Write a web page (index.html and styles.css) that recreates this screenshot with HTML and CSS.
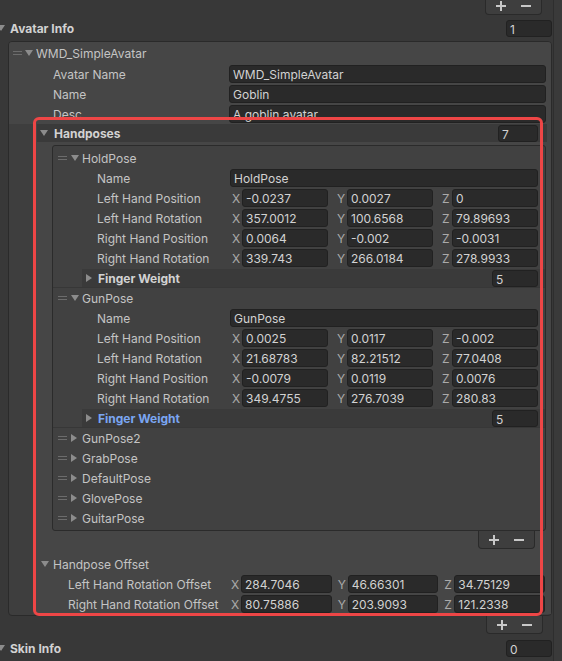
FILE: index.html
```html
<!DOCTYPE html>
<html lang="en">
<head>
    <meta charset="UTF-8">
    <meta name="viewport" content="width=device-width, initial-scale=1.0">
    <title>Avatar Info</title>
    <link rel="stylesheet" href="styles.css">
</head>
<body>
    <div class="inspector">
        <div class="pane">
            <!-- footer of the list above, scrolled half out of view -->
            <div class="list-footer footer-top"><span class="btn-plus"></span><span class="btn-minus"></span></div>

            <div class="row section">
                <span class="tri"></span>
                <span class="bold">Avatar Info</span>
                <span class="field count">1</span>
            </div>

            <div class="list outer">
                <div class="el-top">
                    <div class="row el-head">
                        <span class="handle"></span><span class="tri"></span><span class="el-name">WMD_SimpleAvatar</span>
                    </div>
                    <div class="row prop lv1"><span class="label">Avatar Name</span><span class="field">WMD_SimpleAvatar</span></div>
                    <div class="row prop lv1"><span class="label">Name</span><span class="field">Goblin</span></div>
                    <div class="row prop lv1"><span class="label">Desc</span><span class="field">A goblin avatar.</span></div>
                </div>

                <div class="hp-block">
                    <div class="array-head">
                        <span class="tri"></span>
                        <span class="bold">Handposes</span>
                        <span class="field count">7</span>
                    </div>

                    <div class="list inner">
                        <!-- expanded pose -->
                        <div class="element open">
                            <div class="row el-head">
                                <span class="handle"></span><span class="tri"></span><span class="el-name">HoldPose</span>
                            </div>
                            <div class="row prop lv2"><span class="label">Name</span><span class="field">HoldPose</span></div>
                            <div class="row prop lv2">
                                <span class="label">Left Hand Position</span>
                                <div class="vec">
                                    <div class="axis"><b>X</b><span class="field">-0.0237</span></div>
                                    <div class="axis"><b>Y</b><span class="field">0.0027</span></div>
                                    <div class="axis"><b>Z</b><span class="field">0</span></div>
                                </div>
                            </div>
                            <div class="row prop lv2">
                                <span class="label">Left Hand Rotation</span>
                                <div class="vec">
                                    <div class="axis"><b>X</b><span class="field">357.0012</span></div>
                                    <div class="axis"><b>Y</b><span class="field">100.6568</span></div>
                                    <div class="axis"><b>Z</b><span class="field">79.89693</span></div>
                                </div>
                            </div>
                            <div class="row prop lv2">
                                <span class="label">Right Hand Position</span>
                                <div class="vec">
                                    <div class="axis"><b>X</b><span class="field">0.0064</span></div>
                                    <div class="axis"><b>Y</b><span class="field">-0.002</span></div>
                                    <div class="axis"><b>Z</b><span class="field">-0.0031</span></div>
                                </div>
                            </div>
                            <div class="row prop lv2">
                                <span class="label">Right Hand Rotation</span>
                                <div class="vec">
                                    <div class="axis"><b>X</b><span class="field">339.743</span></div>
                                    <div class="axis"><b>Y</b><span class="field">266.0184</span></div>
                                    <div class="axis"><b>Z</b><span class="field">278.9933</span></div>
                                </div>
                            </div>
                            <div class="row fw-row">
                                <div class="fw-band">
                                    <span class="tri closed"></span>
                                    <span class="bold">Finger Weight</span>
                                    <span class="field count">5</span>
                                </div>
                            </div>
                        </div>

                        <div class="element open">
                            <div class="row el-head">
                                <span class="handle"></span><span class="tri"></span><span class="el-name">GunPose</span>
                            </div>
                            <div class="row prop lv2"><span class="label">Name</span><span class="field">GunPose</span></div>
                            <div class="row prop lv2">
                                <span class="label">Left Hand Position</span>
                                <div class="vec">
                                    <div class="axis"><b>X</b><span class="field">0.0025</span></div>
                                    <div class="axis"><b>Y</b><span class="field">0.0117</span></div>
                                    <div class="axis"><b>Z</b><span class="field">-0.002</span></div>
                                </div>
                            </div>
                            <div class="row prop lv2">
                                <span class="label">Left Hand Rotation</span>
                                <div class="vec">
                                    <div class="axis"><b>X</b><span class="field">21.68783</span></div>
                                    <div class="axis"><b>Y</b><span class="field">82.21512</span></div>
                                    <div class="axis"><b>Z</b><span class="field">77.0408</span></div>
                                </div>
                            </div>
                            <div class="row prop lv2">
                                <span class="label">Right Hand Position</span>
                                <div class="vec">
                                    <div class="axis"><b>X</b><span class="field">-0.0079</span></div>
                                    <div class="axis"><b>Y</b><span class="field">0.0119</span></div>
                                    <div class="axis"><b>Z</b><span class="field">0.0076</span></div>
                                </div>
                            </div>
                            <div class="row prop lv2">
                                <span class="label">Right Hand Rotation</span>
                                <div class="vec">
                                    <div class="axis"><b>X</b><span class="field">349.4755</span></div>
                                    <div class="axis"><b>Y</b><span class="field">276.7039</span></div>
                                    <div class="axis"><b>Z</b><span class="field">280.83</span></div>
                                </div>
                            </div>
                            <div class="row fw-row">
                                <div class="fw-band">
                                    <span class="tri closed"></span>
                                    <span class="bold hover">Finger Weight</span>
                                    <span class="field count">5</span>
                                </div>
                            </div>
                        </div>

                        <!-- collapsed poses -->
                        <div class="row el-head"><span class="handle"></span><span class="tri closed"></span><span class="el-name">GunPose2</span></div>
                        <div class="row el-head"><span class="handle"></span><span class="tri closed"></span><span class="el-name">GrabPose</span></div>
                        <div class="row el-head"><span class="handle"></span><span class="tri closed"></span><span class="el-name">DefaultPose</span></div>
                        <div class="row el-head"><span class="handle"></span><span class="tri closed"></span><span class="el-name">GlovePose</span></div>
                        <div class="row el-head"><span class="handle"></span><span class="tri closed"></span><span class="el-name">GuitarPose</span></div>
                    </div>
                    <div class="list-footer footer-inner"><span class="btn-plus"></span><span class="btn-minus"></span></div>

                    <div class="row foldout">
                        <span class="tri"></span>
                        <span class="text">Handpose Offset</span>
                    </div>
                    <div class="row prop offset">
                        <span class="label">Left Hand Rotation Offset</span>
                        <div class="vec">
                            <div class="axis"><b>X</b><span class="field">284.7046</span></div>
                            <div class="axis"><b>Y</b><span class="field">46.66301</span></div>
                            <div class="axis"><b>Z</b><span class="field">34.75129</span></div>
                        </div>
                    </div>
                    <div class="row prop offset">
                        <span class="label">Right Hand Rotation Offset</span>
                        <div class="vec">
                            <div class="axis"><b>X</b><span class="field">80.75886</span></div>
                            <div class="axis"><b>Y</b><span class="field">203.9093</span></div>
                            <div class="axis"><b>Z</b><span class="field">121.2338</span></div>
                        </div>
                    </div>
                </div>
            </div>
            <div class="list-footer footer-outer"><span class="btn-plus"></span><span class="btn-minus"></span></div>

            <div class="row section skin">
                <span class="tri"></span>
                <span class="bold">Skin Info</span>
                <span class="field count">0</span>
            </div>
        </div>
        <div class="scrollbar"></div>
    </div>

    <!-- red marker around the hand pose block -->
    <div class="callout"></div>
</body>
</html>
```

FILE: styles.css
```css
/* Dark inspector look */
body {
    margin: 0;
    width: 562px;
    height: 661px;
    overflow: hidden;
    position: relative;
    background-color: #383838;
    font-family: Inter, "Noto Sans", sans-serif;
    font-size: 12px;
    line-height: 20px;
    color: #c4c4c4;
}

.inspector {
    display: flex;
    height: 661px;
}

.pane {
    width: 553px;
    flex: none;
}

.scrollbar {
    flex: 1;
    border-left: 1px solid #2e2e2e;
    background-color: #3a3a3a;
}

/* Generic property row */
.row {
    display: flex;
    align-items: center;
    height: 20px;
    white-space: nowrap;
}

/* Inter sits a little high, push label text down a pixel */
.label,
.bold,
.el-name,
.text,
.axis b {
    padding-top: 2px;
    line-height: 20px;
}

.bold {
    font-weight: 700;
    color: #d2d2d2;
}

.hover {
    color: #7aa6f2;
}

/* Foldout arrows */
.tri {
    flex: none;
    width: 0;
    height: 0;
    border-left: 4px solid transparent;
    border-right: 4px solid transparent;
    border-top: 6px solid #8c8c8c;
}

.tri.closed {
    border-top: 4px solid transparent;
    border-bottom: 4px solid transparent;
    border-left: 6px solid #8c8c8c;
    border-right: 0;
}

/* Drag handle of a list element */
.handle {
    flex: none;
    width: 9px;
    height: 4px;
    box-sizing: border-box;
    border-top: 1px solid #6c6c6c;
    border-bottom: 1px solid #6c6c6c;
}

/* Text / number fields */
.field {
    display: block;
    height: 18px;
    box-sizing: border-box;
    padding: 1px 3px 0;
    background-color: #2a2a2a;
    border: 1px solid #212121;
    border-radius: 3px;
    line-height: 16px;
    color: #d2d2d2;
    overflow: hidden;
}

.field.count {
    height: 17px;
    margin-left: auto;
    line-height: 15px;
    padding-top: 1px;
}

.label {
    flex: none;
    overflow: hidden;
}

.prop .field {
    flex: 1;
}

/* Vector3 fields */
.vec {
    flex: 1;
    display: flex;
}

.axis {
    flex: 1;
    display: flex;
    align-items: center;
    min-width: 0;
}

.axis b {
    flex: none;
    width: 12px;
    padding-left: 2px;
    box-sizing: border-box;
    font-weight: 400;
    color: #aaaaaa;
}

.axis .field {
    flex: 1;
    min-width: 0;
}

/* Top level sections */
.section .tri {
    margin-left: -3px;
    margin-right: 5px;
}

.section .count {
    width: 46px;
    margin-right: 1px;
}

.section.skin {
    margin-top: 4px;
}

.section:not(.skin) {
    margin-top: 3px;
}

/* Reorderable list boxes */
.list {
    border: 1px solid #2a2a2a;
    border-radius: 4px;
}

.list.outer {
    margin: 3px 1px 0 8px;
    padding-bottom: 1px;
    background-color: #3e3e3e;
}

/* element rows above the hovered array */
.el-top {
    background-color: #464646;
    border-radius: 3px 3px 0 0;
}

/* hovered Handposes property gets the lighter background */
.hp-block {
    margin-left: 24px;
    background-color: #464646;
}

.list.inner {
    margin: 3px 5px 0 19px;
    padding: 2px 0;
    background-color: #414141;
    border-color: #2b2b2b;
    border-radius: 3px;
}

.outer .el-top .el-head {
    height: 22px;
    padding-left: 4px;
}

.el-top .el-head .tri {
    margin-left: 3px;
}

.el-name {
    margin-left: 3px;
}

.inner .el-head {
    padding-left: 5px;
}

.inner .el-head .tri {
    margin-left: 4px;
}

.inner .el-head .tri.closed {
    margin-right: 1px;
}

.inner .el-head .tri.closed + .el-name {
    margin-left: 4px;
}

.element.open {
    border-bottom: 1px solid #373737;
}

/* Label column: fields start at the same x on every level */
.lv1 {
    padding: 0 5px 0 44px;
}

.lv1 .label {
    width: 176px;
}

.lv2 {
    padding: 0 7px 0 44px;
}

.lv2 .label {
    width: 133px;
}

.lv2 .vec {
    gap: 7px;
}

.offset {
    padding: 0 6px 0 35px;
}

.offset .label {
    width: 161px;
}

.offset .vec {
    gap: 4px;
}

/* Array header bands */
.array-head {
    display: flex;
    align-items: center;
    height: 18px;
    margin: 0 4px 0 4px;
    padding-left: 3px;
    background-color: #3a3a3a;
}

.array-head .tri {
    margin-right: 6px;
}

.array-head .count {
    width: 40px;
    margin-right: 9px;
}

.fw-row {
    height: 19px;
    align-items: flex-start;
}

.fw-band {
    flex: 1;
    display: flex;
    align-items: center;
    height: 18px;
    margin: 1px 0 0 29px;
    padding: 0 7px 0 4px;
    background-color: #3a3a3a;
}

.fw-band .tri {
    margin-right: 6px;
}

.fw-band .count {
    width: 46px;
}

/* Nested foldout */
.foldout {
    margin-top: 5px;
    padding-left: 8px;
}

.foldout .tri {
    margin-right: 4px;
}

/* +/- footer under a list */
.list-footer {
    display: flex;
    align-items: center;
    gap: 13px;
    width: 57px;
    height: 18px;
    box-sizing: border-box;
    padding-left: 9px;
    margin-left: auto;
    background-color: #3e3e3e;
    border: 1px solid #2a2a2a;
    border-top: 0;
    border-radius: 0 0 4px 4px;
}

.footer-top {
    margin-top: -3px;
    margin-right: 11px;
}

.footer-inner {
    margin-right: 16px;
}

.footer-outer {
    margin-right: 10px;
}

.btn-plus,
.btn-minus {
    position: relative;
    width: 12px;
    height: 10px;
    flex: none;
}

.btn-plus::before,
.btn-plus::after,
.btn-minus::before {
    content: "";
    position: absolute;
    background-color: #c8c8c8;
}

.btn-plus::before,
.btn-minus::before {
    left: 1px;
    top: 4px;
    width: 10px;
    height: 2px;
}

.btn-plus::after {
    left: 5px;
    top: 0;
    width: 2px;
    height: 10px;
}

/* Red marker */
.callout {
    position: absolute;
    left: 33px;
    top: 117px;
    width: 510px;
    height: 499px;
    box-sizing: border-box;
    border: 3px solid #ee4646;
    border-radius: 6px;
    pointer-events: none;
}
```
